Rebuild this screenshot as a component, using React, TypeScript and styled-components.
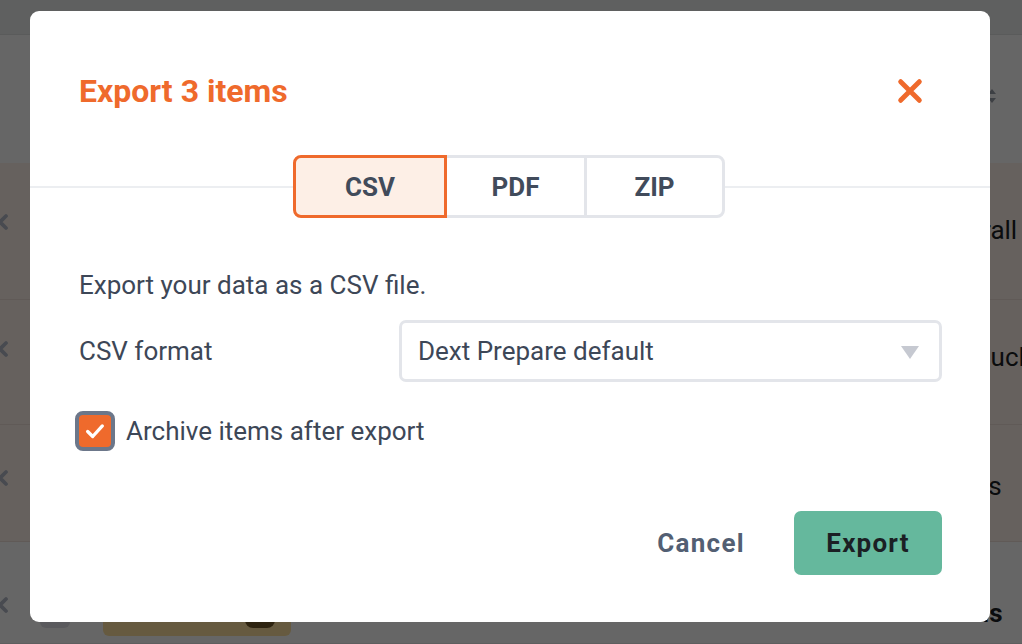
import React, { useState } from "react";
import styled, { createGlobalStyle } from "styled-components";

const GlobalStyle = createGlobalStyle`
  * { box-sizing: border-box; }
  html, body { margin: 0; padding: 0; }
  body { font-family: Roboto, "Noto Sans", Arial, sans-serif; }
`;

const Stage = styled.div`
  position: relative;
  width: 1022px;
  height: 644px;
  overflow: hidden;
  background: #ffffff;
`;

/* ---------- background page (behind the overlay) ---------- */
const Page = styled.div`
  display: flex;
  flex-direction: column;
  height: 100%;
`;

const TopBar = styled.div`
  height: 35px;
  background: #eeefef;
  border-bottom: 1px solid #e2e3e3;
`;

const ToolArea = styled.div`
  height: 128px;
  display: flex;
  justify-content: flex-end;
  align-items: center;
  padding-right: 26px;
  padding-bottom: 6px;
`;

const SortCaret = styled.span`
  width: 8px;
  height: 14px;
  display: flex;
  flex-direction: column;
  justify-content: space-between;
  &::before, &::after {
    content: "";
    border-left: 4px solid transparent;
    border-right: 4px solid transparent;
  }
  &::before { border-bottom: 5px solid #9aa0aa; }
  &::after { border-top: 5px solid #9aa0aa; }
`;

const Row = styled.div<{ $h: number; $selected?: boolean; $top: number }>`
  height: ${(p) => p.$h}px;
  flex: none;
  display: grid;
  grid-template-columns: 40px 1fr 92px;
  align-items: start;
  background: ${(p) => (p.$selected ? "#fff3ec" : "#ffffff")};
  border-bottom: 1px solid ${(p) => (p.$selected ? "#efe2da" : "#ececec")};
  padding-top: ${(p) => p.$top}px;
`;

const RowIcon = styled.span`
  margin: -2px 0 0 -9px;
  display: flex;
`;

const RowMiddle = styled.div`
  display: flex;
  align-items: flex-start;
  gap: 33px;
  margin-top: 20px;
`;

const GhostBox = styled.span`
  width: 30px;
  height: 13px;
  margin-top: -3px;
  border-radius: 0 0 6px 6px;
  background: #e1e2e8;
`;

const Tag = styled.span`
  width: 188px;
  height: 18px;
  border-radius: 0 0 6px 6px;
  background: #ffe2a0;
  display: flex;
  justify-content: flex-end;
  padding-right: 16px;
  &::after {
    content: "";
    width: 30px;
    height: 10px;
    border-radius: 0 0 8px 8px;
    background: #71582a;
  }
`;

const RowText = styled.span<{ $bold?: boolean; $indent: number }>`
  font-size: 26px;
  line-height: 30px;
  font-weight: ${(p) => (p.$bold ? 700 : 400)};
  color: #1b1e23;
  white-space: nowrap;
  padding-left: ${(p) => p.$indent}px;
`;

/* ---------- overlay + modal ---------- */
const Overlay = styled.div`
  position: absolute;
  inset: 0;
  background: rgba(0, 0, 0, 0.6);
  display: flex;
  align-items: flex-start;
  padding: 11px 0 0 30px;
`;

const Modal = styled.div`
  width: 960px;
  height: 611px;
  background: #ffffff;
  border-radius: 9px;
  display: flex;
  flex-direction: column;
`;

const Header = styled.div`
  display: flex;
  justify-content: space-between;
  align-items: center;
  padding: 62px 66px 0 49px;
`;

const Title = styled.h2`
  margin: 0;
  font-size: 32px;
  line-height: 36px;
  font-weight: 700;
  color: #ef6a2c;
`;

const CloseButton = styled.button`
  border: 0;
  background: none;
  padding: 0;
  display: flex;
  cursor: pointer;
`;

const TabStrip = styled.div`
  margin-top: 46px;
  display: flex;
  justify-content: center;
  background: linear-gradient(#eceef1, #eceef1) 0 31px / 100% 2px no-repeat;
  padding-right: 2px;
`;

const Tab = styled.button<{ $active?: boolean; $w: number; $pos: "first" | "mid" | "last" }>`
  width: ${(p) => p.$w}px;
  height: 63px;
  margin-left: ${(p) => (p.$pos === "first" ? 0 : -3)}px;
  position: relative;
  z-index: ${(p) => (p.$active ? 1 : 0)};
  border: 3px solid ${(p) => (p.$active ? "#ef6a2c" : "#e3e5ea")};
  border-radius: ${(p) =>
    p.$pos === "first" ? "8px 0 0 8px" : p.$pos === "last" ? "0 8px 8px 0" : "0"};
  background: ${(p) => (p.$active ? "#fdefe6" : "#ffffff")};
  font-family: Roboto, sans-serif;
  font-size: 26px;
  font-weight: 700;
  color: #414b5b;
  cursor: pointer;
`;

const Body = styled.div`
  padding: 51px 48px 0 49px;
  display: flex;
  flex-direction: column;
`;

const Description = styled.p`
  margin: 0;
  font-size: 26px;
  line-height: 33px;
  color: #3d4757;
`;

const FormRow = styled.div`
  margin-top: 18px;
  display: grid;
  grid-template-columns: 320px 1fr;
  align-items: center;
`;

const Label = styled.label`
  font-size: 26px;
  color: #3d4757;
`;

const Select = styled.div`
  height: 62px;
  border: 3px solid #e3e5ea;
  border-radius: 7px;
  display: flex;
  align-items: center;
  justify-content: space-between;
  padding: 0 20px 0 16px;
  font-size: 26px;
  color: #3d4757;
`;

const Caret = styled.span`
  width: 0;
  height: 0;
  border-left: 9px solid transparent;
  border-right: 9px solid transparent;
  border-top: 13px solid #c6c9d1;
  margin-top: 2px;
`;

const CheckRow = styled.label`
  margin-top: 29px;
  margin-left: -4px;
  display: flex;
  align-items: center;
  gap: 11px;
  font-size: 26px;
  color: #3d4757;
  cursor: pointer;
`;

const CheckBox = styled.span<{ $checked: boolean }>`
  width: 40px;
  height: 40px;
  flex: none;
  border-radius: 8px;
  border: 4px solid #6c778a;
  background: ${(p) => (p.$checked ? "#ef6a2c" : "#ffffff")};
  display: flex;
  align-items: center;
  justify-content: center;
`;

const Footer = styled.div`
  margin-top: auto;
  padding: 0 48px 47px;
  display: flex;
  justify-content: flex-end;
  align-items: center;
  gap: 25px;
`;

const TextButton = styled.button`
  border: 0;
  background: none;
  padding: 0 24px;
  height: 64px;
  font-family: Roboto, sans-serif;
  font-size: 26px;
  font-weight: 700;
  letter-spacing: 1.3px;
  color: #535f73;
  cursor: pointer;
`;

const PrimaryButton = styled.button`
  border: 0;
  width: 148px;
  height: 64px;
  border-radius: 7px;
  background: #65b89d;
  font-family: Roboto, sans-serif;
  font-size: 26px;
  font-weight: 700;
  letter-spacing: 1.2px;
  color: #1b1f24;
  cursor: pointer;
`;

const XIcon = ({ size, color, width }: { size: number; color: string; width: number }) => (
  <svg width={size} height={size} viewBox="0 0 24 24" fill="none">
    <path d="M4 4 L20 20 M20 4 L4 20" stroke={color} strokeWidth={width} strokeLinecap="round" />
  </svg>
);

const tabs = [
  { key: "CSV", w: 154 },
  { key: "PDF", w: 143 },
  { key: "ZIP", w: 141 },
];

const RowX = () => (
  <RowIcon>
    <XIcon size={18} color="#b3bac8" width={5} />
  </RowIcon>
);

export default function App() {
  const [active, setActive] = useState("CSV");
  const [archive, setArchive] = useState(true);

  return (
    <Stage>
      <GlobalStyle />
      <Page>
        <TopBar />
        <ToolArea>
          <SortCaret />
        </ToolArea>
        <Row $h={137} $selected $top={52}>
          <RowX />
          <span />
          <RowText $indent={8}>Overall</RowText>
        </Row>
        <Row $h={125} $selected $top={42}>
          <RowX />
          <span />
          <RowText $indent={42}>Nucleus</RowText>
        </Row>
        <Row $h={117} $selected $top={46}>
          <RowX />
          <span />
          <RowText $indent={6}>Items</RowText>
        </Row>
        <Row $h={102} $top={56}>
          <RowX />
          <RowMiddle>
            <GhostBox />
            <Tag />
          </RowMiddle>
          <RowText $bold $indent={1}>Totals</RowText>
        </Row>
      </Page>

      <Overlay>
        <Modal role="dialog" aria-label="Export 3 items">
          <Header>
            <Title>Export 3 items</Title>
            <CloseButton aria-label="Close">
              <XIcon size={28} color="#ef6a2c" width={4.2} />
            </CloseButton>
          </Header>

          <TabStrip>
            {tabs.map((t, i) => (
              <Tab
                key={t.key}
                $w={t.w}
                $pos={i === 0 ? "first" : i === tabs.length - 1 ? "last" : "mid"}
                $active={active === t.key}
                onClick={() => setActive(t.key)}
              >
                {t.key}
              </Tab>
            ))}
          </TabStrip>

          <Body>
            <Description>Export your data as a CSV file.</Description>
            <FormRow>
              <Label>CSV format</Label>
              <Select>
                <span>Dext Prepare default</span>
                <Caret />
              </Select>
            </FormRow>
            <CheckRow onClick={() => setArchive(!archive)}>
              <CheckBox $checked={archive}>
                {archive && (
                  <svg width="22" height="22" viewBox="0 0 24 24" fill="none">
                    <path d="M4 12.5 L9.5 18 L20 6.5" stroke="#fff" strokeWidth="3.6" strokeLinecap="round" strokeLinejoin="round" />
                  </svg>
                )}
              </CheckBox>
              Archive items after export
            </CheckRow>
          </Body>

          <Footer>
            <TextButton>Cancel</TextButton>
            <PrimaryButton>Export</PrimaryButton>
          </Footer>
        </Modal>
      </Overlay>
    </Stage>
  );
}
